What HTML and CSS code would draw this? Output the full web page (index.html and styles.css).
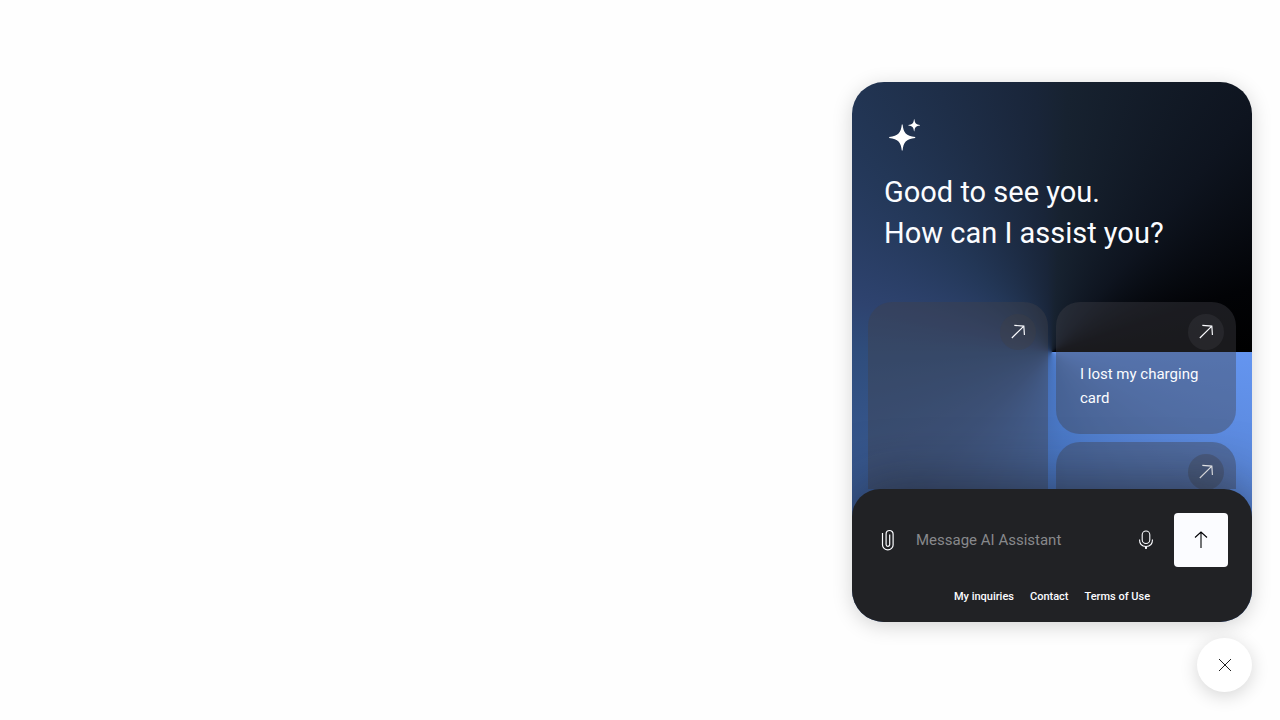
FILE: index.html
```html
<!DOCTYPE html>
<html lang="en">
<head>
<meta charset="utf-8">
<meta name="viewport" content="width=device-width, initial-scale=1">
<title>AI Assistant</title>
<link rel="stylesheet" href="styles.css">
</head>
<body class="page">
<svg class="sprite" aria-hidden="true">
  <symbol id="arrow-ne" viewBox="0 0 24 24"><path d="M4.600 19.200 19 5M7.600 4.100l11.400.8.7 10.700" fill="none" stroke="currentColor" stroke-width="1.400"/></symbol>
</svg>
<main class="panel">
  <header class="intro">
    <svg class="sparkle" viewBox="0 0 36 36" aria-hidden="true">
      <path d="M17.800 8.500h.8c.8 8.200 3.400 11.400 12.600 12.400v1c-9.200 1-11.800 4.200-12.600 12.600h-.8c-.8-8.400-3.600-11.600-12.600-12.600v-1c9-1 11.800-4.200 12.600-12.400z"/>
      <path d="M30 3.200h.4c.4 3.900 1.700 5.400 5.600 5.800v.4c-3.900.4-5.200 1.900-5.600 5.800H30c-.4-3.900-1.700-5.400-5.600-5.800V9c3.900-.4 5.200-1.900 5.600-5.800z"/>
    </svg>
    <h1 class="title">Good to see you.<br>How can I assist you?</h1>
  </header>
  <section class="suggestions" aria-label="Suggestions">
    <button class="card card-tall" type="button" aria-label="Featured suggestion">
      <span class="card-icon"><svg class="arrow" aria-hidden="true"><use href="#arrow-ne"/></svg></span>
    </button>
    <button class="card" type="button">
      <span class="card-icon"><svg class="arrow" aria-hidden="true"><use href="#arrow-ne"/></svg></span>
      <span class="card-text">I lost my charging card</span>
    </button>
    <button class="card" type="button" aria-label="Another suggestion">
      <span class="card-icon"><svg class="arrow" aria-hidden="true"><use href="#arrow-ne"/></svg></span>
    </button>
  </section>
  <footer class="composer">
    <form class="message">
      <button class="icon-button" type="button" aria-label="Attach file">
        <svg class="icon" viewBox="0 0 24 24" aria-hidden="true"><path d="M6.500 5v12a5.300 4.800 0 0 0 10.600 0V6a3.500 3.500 0 0 0-7 0v10.500a1.800 1.800 0 0 0 3.600 0V6.500" fill="none" stroke="currentColor" stroke-width="1.200"/></svg>
      </button>
      <input class="message-input" type="text" placeholder="Message AI Assistant" aria-label="Message AI Assistant">
      <button class="icon-button" type="button" aria-label="Voice input">
        <svg class="icon" viewBox="0 0 24 24" aria-hidden="true"><rect x="8.200" y="3" width="7.600" height="12.500" rx="3.800" fill="none" stroke="currentColor" stroke-width="1.100"/><path d="M5.500 11.500c0 4.500 2.500 7 6.500 7s6.500-2.500 6.500-7" fill="none" stroke="currentColor" stroke-width="1.100"/><path d="M10.800 18.500h2.400l-.4 2.500h-1.600z" fill="currentColor"/></svg>
      </button>
      <button class="send" type="submit" aria-label="Send">
        <svg class="icon" viewBox="0 0 24 24" aria-hidden="true"><path d="M12 20V4M6 9.500l6-5.400 6 5.400" fill="none" stroke="currentColor" stroke-width="1.100"/></svg>
      </button>
    </form>
    <nav class="links" aria-label="Assistant links">
      <a class="link" href="#inquiries">My inquiries</a>
      <a class="link" href="#contact">Contact</a>
      <a class="link" href="#terms">Terms of Use</a>
    </nav>
  </footer>
</main>
<button class="close" type="button" aria-label="Close assistant">
  <svg class="close-icon" viewBox="0 0 20 20" aria-hidden="true"><path d="m4 4 12 12M16 4 4 16" fill="none" stroke="currentColor" stroke-width="1"/></svg>
</button>
</body>
</html>
```

FILE: styles.css
```css
* {
  box-sizing: border-box;
}

.page {
  display: flex;
  flex-direction: column;
  align-items: flex-end;
  justify-content: flex-end;
  gap: 16px;
  height: 100vh;
  margin: 0;
  padding: 28px;
  background: #fefefe;
  color: #fbfcff;
  font-family: Roboto, "Liberation Sans", sans-serif;
}

.sprite {
  position: absolute;
  width: 0;
  height: 0;
}

.panel {
  display: flex;
  flex: 1;
  flex-direction: column;
  width: 100%;
  max-width: 400px;
  min-height: 0;
  max-height: 540px;
  overflow: hidden;
  border-radius: 32px;
  background: conic-gradient(from 90deg, #6495f0 0%, #5784d5 12%, #4a78c6 23%, #3a5b95 38%, #2f4d7c 50%, #2e436f 54%, #233757 63%, #192539 74%, #172230 76%, #0e141f 86%, #020306 95%, #000 100%);
  box-shadow: 0 4px 20px rgba(0, 0, 0, 0.17);
}

.intro {
  padding: 34px 32px 48px;
}

.sparkle {
  display: block;
  width: 36px;
  height: 36px;
  fill: #fff;
}

.title {
  margin: 20px 0 0;
  font-size: 29px;
  font-weight: 400;
  line-height: 41px;
}

.suggestions {
  display: grid;
  flex: 1;
  grid-template-columns: 1fr 1fr;
  grid-auto-rows: 132px;
  gap: 8px;
  min-height: 0;
  padding: 0 16px;
  overflow: hidden;
}

.card {
  display: flex;
  flex-direction: column;
  gap: 12px;
  padding: 12px 12px 24px 24px;
  border: 0;
  border-radius: 24px;
  background: rgba(66, 66, 72, 0.4);
  color: inherit;
  font: inherit;
  text-align: left;
}

.card-tall {
  grid-row: span 2;
}

.card-icon {
  display: flex;
  align-self: flex-end;
  align-items: center;
  justify-content: center;
  width: 36px;
  height: 36px;
  border-radius: 50%;
  background: rgba(62, 62, 68, 0.35);
}

.arrow {
  width: 20px;
  height: 20px;
}

.card-text {
  font-size: 15px;
  line-height: 24px;
}

.composer {
  position: relative;
  padding: 24px 24px 15px;
  border-radius: 28px 28px 0 0;
  background: #212225;
  box-shadow: 0 0 60px rgba(20, 20, 24, 0.6);
}

.message {
  display: flex;
  align-items: center;
  gap: 16px;
}

.icon-button {
  display: flex;
  padding: 0;
  border: 0;
  background: none;
  color: inherit;
}

.icon {
  width: 24px;
  height: 24px;
}

.message-input {
  flex: 1;
  min-width: 0;
  padding: 0;
  border: 0;
  outline: 0;
  background: none;
  color: inherit;
  font: 15px/24px Roboto, "Liberation Sans", sans-serif;
}

.message-input::placeholder {
  color: #88898c;
  opacity: 1;
}

.send {
  display: flex;
  align-items: center;
  justify-content: center;
  width: 54px;
  height: 54px;
  padding: 0;
  border: 0;
  border-radius: 4px;
  background: #fbfcff;
  color: #010205;
}

.links {
  display: flex;
  justify-content: center;
  gap: 16px;
  margin-top: 20px;
}

.link {
  color: inherit;
  font-size: 11px;
  font-weight: 500;
  line-height: 20px;
  text-decoration: none;
}

.close {
  display: flex;
  flex: none;
  align-items: center;
  justify-content: center;
  width: 55px;
  height: 54px;
  padding: 0;
  border: 0;
  border-radius: 50%;
  background: #fff;
  box-shadow: 0 4px 18px rgba(0, 0, 0, 0.16);
  color: #222;
}

.close-icon {
  width: 20px;
  height: 20px;
}
```
